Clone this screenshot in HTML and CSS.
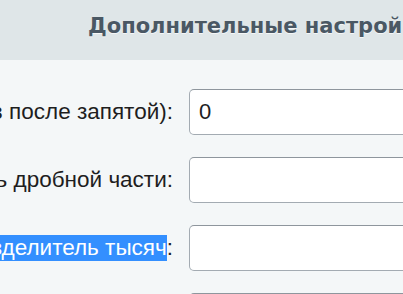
FILE: index.html
```html
<!DOCTYPE html>
<html lang="ru">
<head>
    <meta charset="UTF-8">
    <meta name="viewport" content="width=device-width, initial-scale=1.0">
    <title>Дополнительные настройки</title>
    <link rel="stylesheet" href="styles.css">
</head>
<body>
    <div class="panel">
        <header class="panel-head">
            <h2>Дополнительные настройки</h2>
        </header>

        <form class="settings">
            <label class="field-label" for="precision">Точность (знаков после запятой):</label>
            <input class="field-input" id="precision" type="text" value="0">

            <label class="field-label" for="dec-sep">Разделитель дробной части:</label>
            <input class="field-input" id="dec-sep" type="text">

            <label class="field-label" for="thou-sep"><span class="selected">Разделитель тысяч</span>:</label>
            <input class="field-input" id="thou-sep" type="text">

            <label class="field-label" for="currency">Валюта:</label>
            <input class="field-input" id="currency" type="text">
        </form>
    </div>
</body>
</html>
```

FILE: styles.css
```css
:root {
    --head-bg: #dfe6e8;
    --page-bg: #f4f7f8;
    --title-color: #4a5864;
    --text-color: #1e1e1e;
    --border-color: #a3abb2;
    --select-color: #338fff;
}

body {
    margin: 0;
    background-color: var(--page-bg);
    font-family: "Liberation Sans", Arial, sans-serif;
    color: var(--text-color);
    overflow: hidden;
}

.panel-head {
    height: 60px;
    background-color: var(--head-bg);
    box-sizing: border-box;
    padding: 14px 0 0 88px;
}

.panel-head h2 {
    margin: 0;
    font-family: "DejaVu Sans", Verdana, sans-serif;
    font-size: 21px;
    line-height: 24px;
    font-weight: bold;
    white-space: nowrap;
    color: var(--title-color);
    text-shadow: 0 1px 0 rgba(255, 255, 255, 0.7);
}

.settings {
    display: grid;
    grid-template-columns: 173px 320px;
    column-gap: 16px;
    row-gap: 22px;
    padding-top: 29px;
}

.field-label {
    display: flex;
    justify-content: flex-end;
    align-items: center;
    white-space: nowrap;
    font-size: 22.5px;
}

.selected {
    background-color: var(--select-color);
    color: #fff;
}

.field-input {
    height: 46px;
    box-sizing: border-box;
    border: 1px solid var(--border-color);
    border-top-color: #8e969d;
    border-radius: 5px;
    background: #fff;
    padding: 0 9px;
    font-family: "Liberation Sans", Arial, sans-serif;
    font-size: 22px;
    color: var(--text-color);
    outline: none;
}
```
